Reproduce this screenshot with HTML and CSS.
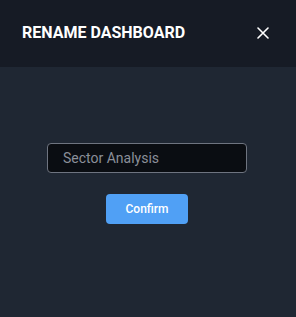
FILE: index.html
```html
<!DOCTYPE html>
<html lang="en">
<head>
  <meta charset="UTF-8">
  <meta name="viewport" content="width=device-width, initial-scale=1.0">
  <title>Rename Dashboard</title>
  <link rel="stylesheet" href="styles.css">
</head>
<body>
  <div class="dialog">
    <div class="dialog-header">
      <h2 class="dialog-title">RENAME DASHBOARD</h2>
      <button class="close-btn" aria-label="Close">
        <svg width="12" height="12" viewBox="0 0 12 12">
          <path d="M1 1 L11 11 M11 1 L1 11" stroke="#fff" stroke-width="1.6" stroke-linecap="round"/>
        </svg>
      </button>
    </div>
    <div class="dialog-body">
      <input class="name-input" type="text" placeholder="Sector Analysis">
      <button class="confirm-btn">Confirm</button>
    </div>
  </div>
</body>
</html>
```
FILE: styles.css
```css
body {
  margin: 0;
  background: #1f2733;
  font-family: Roboto, 'Liberation Sans', Arial, sans-serif;
}
.dialog {
  width: 296px;
  height: 317px;
  display: flex;
  flex-direction: column;
}
.dialog-header {
  height: 67px;
  background: #161b25;
  display: flex;
  align-items: center;
  justify-content: space-between;
  padding: 0 27px 0 22px;
  box-sizing: border-box;
}
.dialog-title {
  margin: 0;
  color: #fff;
  font-size: 16px;
  font-weight: 700;
  position: relative;
  top: -1px;
}
.close-btn {
  background: none;
  border: none;
  padding: 0;
  width: 12px;
  height: 12px;
  cursor: pointer;
  display: flex;
  position: relative;
  top: -1px;
}
.dialog-body {
  display: flex;
  flex-direction: column;
  align-items: center;
  padding: 76px 2px 0 0;
  gap: 21px;
}
.name-input {
  width: 200px;
  height: 30px;
  box-sizing: border-box;
  background: #0a0d12;
  border: 1px solid #6e7480;
  border-radius: 4px;
  padding: 0 15px;
  color: #d0d4da;
  font-family: inherit;
  font-size: 14px;
  outline: none;
}
.name-input::placeholder {
  color: #8a8f99;
}
.confirm-btn {
  width: 82px;
  height: 30px;
  background: #50a0f5;
  border: none;
  border-radius: 4px;
  color: #fff;
  font-family: inherit;
  font-size: 12px;
  font-weight: 500;
  cursor: pointer;
}
```
